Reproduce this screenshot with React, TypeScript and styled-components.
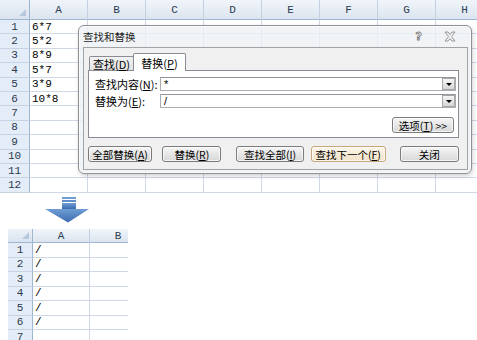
import React from 'react';
import styled, { createGlobalStyle } from 'styled-components';

const GlobalStyle = createGlobalStyle`
	*, *::before, *::after {
		box-sizing: border-box;
	}
	html,
	body {
		margin: 0;
		padding: 0;
		background: #fff;
	}
	body {
		font-family: 'Liberation Mono', 'Noto Sans CJK SC', monospace;
	}
`;

const topCols = ['A', 'B', 'C', 'D', 'E', 'F', 'G', 'H'];
const topData = ['6*7', '5*2', '8*9', '5*7', '3*9', '10*8'];
const bottomData = ['/', '/', '/', '/', '/', '/'];

const App = () => {
	return (
		<Page>
			<GlobalStyle />
			<Sheet $cols='30px repeat(8, 58px)' $rows='20px repeat(12, 14.4px)' $h={194}>
				<Corner />
				{topCols.map((c) => (
					<ColHead key={c}>{c}</ColHead>
				))}
				{Array.from({ length: 12 }).map((_, r) => (
					<React.Fragment key={r}>
						<RowHead>{r + 1}</RowHead>
						{topCols.map((c, i) => (
							<Cell key={c}>{i === 0 ? topData[r] ?? '' : ''}</Cell>
						))}
					</React.Fragment>
				))}
			</Sheet>

			<ArrowRow>
				<svg width='44' height='26' viewBox='0 0 44 26'>
					<defs>
						<linearGradient id='arr' x1='0' y1='0' x2='0' y2='1'>
							<stop offset='0' stopColor='#6f9dd4' />
							<stop offset='1' stopColor='#3b6cae' />
						</linearGradient>
					</defs>
					<rect x='17' y='0' width='14' height='2' fill='#6f9dd4' />
					<rect x='17' y='3' width='14' height='2' fill='#5f8fcb' />
					<rect x='17' y='6' width='14' height='6' fill='url(#arr)' />
					<polygon points='0,12 44,12 23,25.5' fill='url(#arr)' />
				</svg>
			</ArrowRow>

			<Sheet $cols='25px 57px 57px' $rows='14px repeat(7, 14.5px)' $h={111} $w={120} $ml={8}>
				<Corner />
				<ColHead>A</ColHead>
				<ColHead>B</ColHead>
				{Array.from({ length: 7 }).map((_, r) => (
					<React.Fragment key={r}>
						<RowHead>{r + 1}</RowHead>
						<Cell>{bottomData[r] ?? ''}</Cell>
						<Cell />
					</React.Fragment>
				))}
			</Sheet>

			<Dialog>
				<TitleBar>
					<Title>查找和替换</Title>
					<HelpGlyph>?</HelpGlyph>
					<CloseGlyph>
						<svg width='12' height='11' viewBox='0 0 12 11'>
							<path
								d='M1 1 L4 1 L6 3.5 L8 1 L11 1 L7.5 5.5 L11 10 L8 10 L6 7.5 L4 10 L1 10 L4.5 5.5 Z'
								fill='#f4f4f4'
								stroke='#8a8a8a'
								strokeWidth='0.9'
							/>
						</svg>
					</CloseGlyph>
				</TitleBar>
				<Client>
					<TabRow>
						<Tab>
							查找(<Acc>D</Acc>)
						</Tab>
						<Tab $active>
							替换(<Acc>P</Acc>)
						</Tab>
					</TabRow>
					<Panel>
						<FieldRow>
							<FieldLabel>
								查找内容(<Acc>N</Acc>):
							</FieldLabel>
							<Field>
								<FieldText>*</FieldText>
								<DropBtn />
							</Field>
						</FieldRow>
						<FieldRow $mt={3}>
							<FieldLabel>
								替换为(<Acc>E</Acc>):
							</FieldLabel>
							<Field>
								<FieldText>/</FieldText>
								<DropBtn />
							</Field>
						</FieldRow>
						<OptionsRow>
							<Button $w={62}>
								选项(<Acc>T</Acc>) &gt;&gt;
							</Button>
						</OptionsRow>
					</Panel>
					<ButtonRow>
						<Button $w={65}>
							全部替换(<Acc>A</Acc>)
						</Button>
						<Button $w={60} $ml={10}>
							替换(<Acc>R</Acc>)
						</Button>
						<Button $w={68} $ml={15}>
							查找全部(<Acc>I</Acc>)
						</Button>
						<Button $w={76} $ml={7} $default>
							查找下一个(<Acc>F</Acc>)
						</Button>
						<Button $w={60} $ml={14}>
							关闭
						</Button>
					</ButtonRow>
				</Client>
			</Dialog>
		</Page>
	);
};

export default App;

const Page = styled.div`
	position: relative;
	width: 477px;
	height: 340px;
	overflow: hidden;
	background: #fff;
`;

const Sheet = styled.div<{ $cols: string; $rows: string; $h: number; $w?: number; $ml?: number }>`
	display: grid;
	grid-template-columns: ${({ $cols }) => $cols};
	grid-template-rows: ${({ $rows }) => $rows};
	height: ${({ $h }) => $h}px;
	width: ${({ $w }) => ($w ? `${$w}px` : 'auto')};
	margin-left: ${({ $ml }) => $ml ?? 0}px;
	overflow: hidden;
	font-family: 'Liberation Mono', monospace;
	font-size: 11px;
	color: #000;
`;

const Corner = styled.div`
	position: relative;
	background: linear-gradient(#edf2f9, #d9e3ef);
	border-right: 1px solid #9eb6ce;
	border-bottom: 1px solid #9eb6ce;
	&::after {
		content: '';
		position: absolute;
		right: 3px;
		bottom: 3px;
		border-left: 7px solid transparent;
		border-bottom: 7px solid #b8c9de;
	}
`;

const ColHead = styled.div`
	display: flex;
	align-items: center;
	justify-content: center;
	background: linear-gradient(#f1f5fa, #dbe4ef);
	border-right: 1px solid #c3d0e0;
	border-bottom: 1px solid #9eb6ce;
	color: #2b3a4f;
	white-space: nowrap;
`;

const RowHead = styled.div`
	display: flex;
	align-items: center;
	justify-content: center;
	background: #e4ecf7;
	border-right: 1px solid #9eb6ce;
	border-bottom: 1px solid #c5d3e4;
	color: #2b3a4f;
`;

const Cell = styled.div`
	display: flex;
	align-items: center;
	padding-left: 2px;
	border-right: 1px solid #d0d7e5;
	border-bottom: 1px solid #d0d7e5;
	white-space: nowrap;
`;

const ArrowRow = styled.div`
	height: 35px;
	padding: 3px 0 0 45px;
	svg {
		display: block;
	}
`;

const Dialog = styled.div`
	position: absolute;
	left: 78px;
	top: 25px;
	width: 394px;
	height: 149px;
	display: flex;
	flex-direction: column;
	padding: 0 3px 3px 4px;
	border: 1px solid #8d9094;
	border-radius: 6px;
	background: rgba(238, 241, 245, 0.8);
	box-shadow: inset 0 0 0 1px rgba(255, 255, 255, 0.75), 1px 2px 4px rgba(0, 0, 0, 0.18);
	font-family: 'Noto Sans CJK SC', sans-serif;
	font-size: 11px;
	color: #000;
`;

const TitleBar = styled.div`
	display: flex;
	align-items: center;
	height: 21px;
`;

const Title = styled.div`
	font-size: 10.5px;
	color: #1e1e1e;
`;

const HelpGlyph = styled.div`
	margin-left: auto;
	margin-right: 22px;
	font-family: 'DejaVu Sans', sans-serif;
	font-size: 11px;
	font-weight: bold;
	color: #f2f2f2;
	-webkit-text-stroke: 0.8px #7d7d7d;
`;

const CloseGlyph = styled.div`
	display: flex;
	margin-right: 12px;
`;

const Client = styled.div`
	flex: 1;
	display: flex;
	flex-direction: column;
	padding: 5px 8px 0 4px;
	border: 1px solid #a3a3a3;
	background: #f0f0f0;
`;

const TabRow = styled.div`
	position: relative;
	z-index: 1;
	display: flex;
	align-items: flex-end;
	height: 18px;
	margin-bottom: -1px;
	padding-left: 1px;
`;

const Tab = styled.div<{ $active?: boolean }>`
	display: flex;
	align-items: center;
	justify-content: center;
	width: ${({ $active }) => ($active ? 53 : 45)}px;
	height: ${({ $active }) => ($active ? 18 : 14)}px;
	margin-left: ${({ $active }) => ($active ? -1 : 0)}px;
	margin-bottom: ${({ $active }) => ($active ? 0 : 1)}px;
	border: 1px solid #898c95;
	border-bottom: none;
	border-radius: 2px 2px 0 0;
	background: ${({ $active }) => ($active ? '#fff' : 'linear-gradient(#f3f3f3, #e2e2e2)')};
	white-space: nowrap;
	padding-top: ${({ $active }) => ($active ? 0 : 1)}px;
`;

const Panel = styled.div`
	height: 68px;
	padding: 6px 2px 0 6px;
	border: 1px solid #898c95;
	background: #fff;
`;

const FieldRow = styled.div<{ $mt?: number }>`
	display: flex;
	align-items: center;
	height: 14px;
	margin-top: ${({ $mt }) => $mt ?? 0}px;
`;

const FieldLabel = styled.div`
	width: 65px;
	white-space: nowrap;
`;

const Field = styled.div`
	flex: 1;
	display: flex;
	align-items: center;
	height: 14px;
	padding: 0 0 0 3px;
	border: 1px solid #abadb3;
	border-top-color: #8f939b;
	background: #fff;
`;

const FieldText = styled.span`
	font-family: 'Liberation Sans', sans-serif;
	font-size: 11px;
`;

const DropBtn = styled.div`
	position: relative;
	width: 13px;
	height: 12px;
	margin-left: auto;
	border: 1px solid #a7a7a7;
	background: linear-gradient(#f6f6f6, #d6d6d6);
	&::after {
		content: '';
		position: absolute;
		left: 3px;
		top: 4px;
		border-left: 3px solid transparent;
		border-right: 3px solid transparent;
		border-top: 3px solid #000;
	}
`;

const OptionsRow = styled.div`
	display: flex;
	justify-content: flex-end;
	margin-top: 9px;
	padding-right: 2px;
`;

const ButtonRow = styled.div`
	display: flex;
	margin-top: 8px;
`;

const Button = styled.div<{ $w: number; $ml?: number; $default?: boolean }>`
	display: flex;
	align-items: center;
	justify-content: center;
	width: ${({ $w }) => $w}px;
	height: 16px;
	margin-left: ${({ $ml }) => $ml ?? 0}px;
	border: 1px solid ${({ $default }) => ($default ? '#c9a77a' : '#7b7b7b')};
	border-radius: 3px;
	background: ${({ $default }) =>
		$default ? 'linear-gradient(#fdf6ea, #f1e2c8)' : 'linear-gradient(#f6f6f6, #e6e6e6 50%, #d8d8d8)'};
	box-shadow: inset 0 0 0 1px rgba(255, 255, 255, 0.7);
	white-space: nowrap;
	font-size: 10.5px;
`;

const Acc = styled.span`
	text-decoration: underline;
`;
